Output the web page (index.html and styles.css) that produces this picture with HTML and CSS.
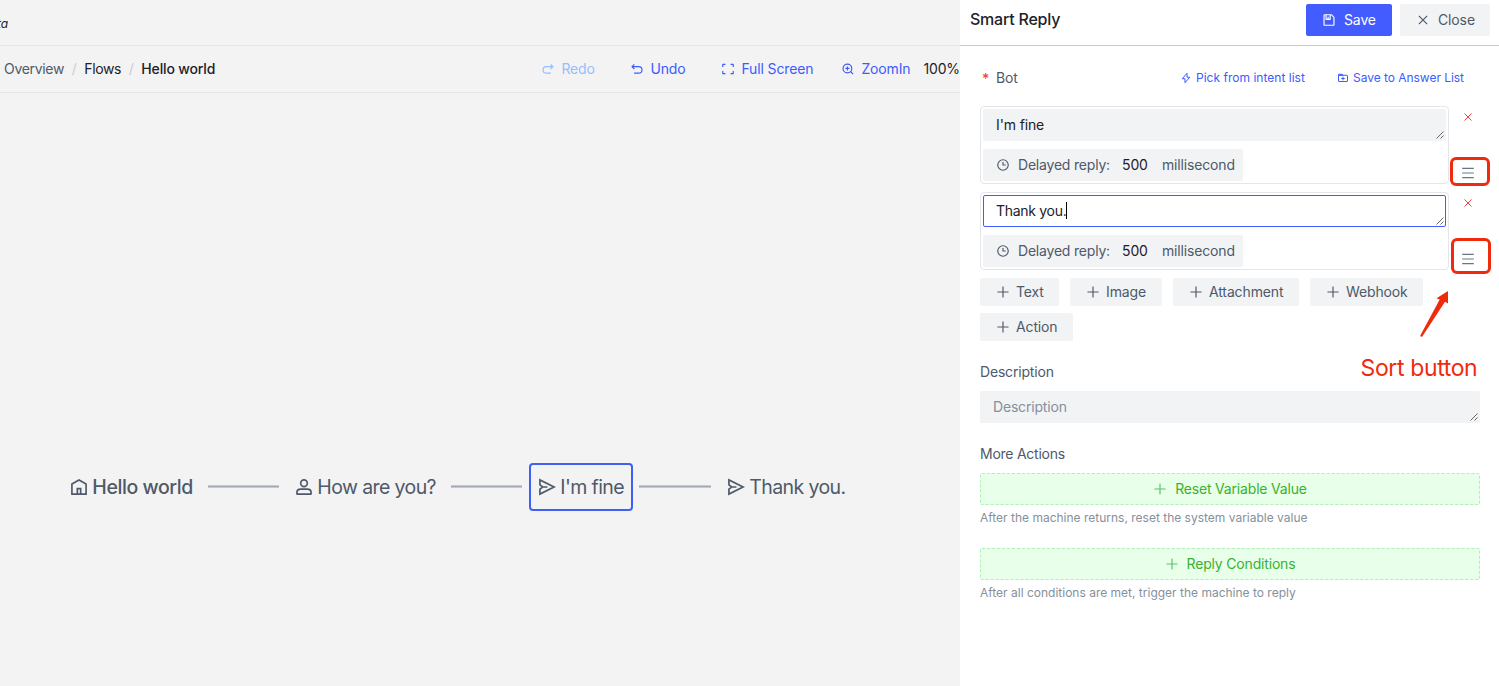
FILE: index.html
```
<!DOCTYPE html>
<html lang="en">
<head>
<meta charset="utf-8">
<title>Smart Reply</title>
<link rel="stylesheet" href="styles.css">
</head>
<body>
<svg class="sprite" aria-hidden="true">
  <symbol id="close" viewBox="0 0 48 48"><path d="M9.857 9.858 38.142 38.142M38.142 9.858 9.857 38.142"/></symbol>
  <symbol id="plus" viewBox="0 0 48 48"><path d="M5 24h38M24 5v38"/></symbol>
  <symbol id="save" viewBox="0 0 48 48"><path d="M21 13v9m18 20H9a2 2 0 0 1-2-2V8a2 2 0 0 1 2-2h22.55a2 2 0 0 1 1.414.586l7.45 7.45A2 2 0 0 1 41 15.45V40a2 2 0 0 1-2 2ZM14 6h14v15a1 1 0 0 1-1 1H15a1 1 0 0 1-1-1V6Z"/></symbol>
  <symbol id="clock" viewBox="0 0 48 48"><path d="M24 14v10h9.5"/><circle cx="24" cy="24" r="18"/></symbol>
  <symbol id="undo" viewBox="0 0 48 48"><path d="m15 8-8 8 8 8M8 16h22a11 11 0 0 1 0 22H14"/></symbol>
  <symbol id="redo" viewBox="0 0 48 48"><path d="m33 8 8 8-8 8M40 16H18a11 11 0 0 0 0 22h16"/></symbol>
  <symbol id="fullscreen" viewBox="0 0 48 48"><path d="M42 17V9a1 1 0 0 0-1-1h-8M6 17V9a1 1 0 0 1 1-1h8m27 23v8a1 1 0 0 1-1 1h-8M6 31v8a1 1 0 0 0 1 1h8"/></symbol>
  <symbol id="zoomin" viewBox="0 0 48 48"><circle cx="22" cy="22" r="15"/><path d="m32.6 32.6 8.9 8.9M29 22H15m7 7V15"/></symbol>
  <symbol id="home" viewBox="0 0 48 48"><path d="M7 17 24 7l17 10v24H7V17ZM20 28h8v13h-8V28Z"/></symbol>
  <symbol id="user" viewBox="0 0 48 48"><path d="M7 37c0-4.97 4.03-8 9-8h16c4.97 0 9 3.03 9 8v3a1 1 0 0 1-1 1H8a1 1 0 0 1-1-1v-3Z"/><circle cx="24" cy="15" r="8"/></symbol>
  <symbol id="send" viewBox="0 0 48 48"><path d="m14 24-7-5V7l34 17L7 41V29l7-5Zm0 0h11"/></symbol>
  <symbol id="bolt" viewBox="0 0 48 48"><path d="M28 5v16h11L20 43V27H9L28 5Z"/></symbol>
  <symbol id="folder" viewBox="0 0 48 48"><path d="M24 19v14m-7-7h14M6 13h18l-2.8-4H7a1 1 0 0 0-1 1v3Zm0 0h34a2 2 0 0 1 2 2v21a2 2 0 0 1-2 2H8a2 2 0 0 1-2-2V13Z"/></symbol>
  <symbol id="menu" viewBox="0 0 48 48"><path d="M4 8h40M4 24h40M4 40h40"/></symbol>
  <symbol id="grip" viewBox="0 0 8 8"><path d="M0.5 7.5 7.5 0.5M4.5 7.5l3-3"/></symbol>
</svg>

<div class="app">
  <main class="workspace">
    <header class="topbar"><em>ta</em></header>
    <div class="toolbar">
      <nav class="crumbs">
        <span class="muted">Overview</span><i>/</i><span class="flows">Flows</span><i>/</i><b>Hello world</b>
      </nav>
      <div class="tools">
        <span class="tool disabled"><svg class="icon"><use href="#redo"/></svg>Redo</span>
        <span class="tool"><svg class="icon"><use href="#undo"/></svg>Undo</span>
        <span class="tool fs"><svg class="icon"><use href="#fullscreen"/></svg>Full Screen</span>
        <span class="tool zi"><svg class="icon"><use href="#zoomin"/></svg>ZoomIn</span>
        <span class="percent">100%</span>
      </div>
    </div>
    <div class="canvas">
      <div class="node n1"><svg class="icon"><use href="#home"/></svg><b>Hello world</b></div>
      <div class="edge e1"></div>
      <div class="node n2"><svg class="icon"><use href="#user"/></svg><span>How are you?</span></div>
      <div class="edge e2"></div>
      <div class="node n3 selected"><svg class="icon"><use href="#send"/></svg><span>I'm fine</span></div>
      <div class="edge e3"></div>
      <div class="node n4"><svg class="icon"><use href="#send"/></svg><span>Thank you.</span></div>
    </div>
  </main>

  <aside class="drawer">
    <header class="drawer-head">
      <h1>Smart Reply</h1>
      <button class="btn primary"><svg class="icon"><use href="#save"/></svg>Save</button>
      <button class="btn"><svg class="icon"><use href="#close"/></svg>Close</button>
    </header>
    <div class="drawer-body">
      <div class="bot-row">
        <span class="star">*</span><span class="label">Bot</span>
        <a class="pick"><svg class="icon"><use href="#bolt"/></svg>Pick from intent list</a>
        <a class="answer"><svg class="icon"><use href="#folder"/></svg>Save to Answer List</a>
      </div>
      <div class="reply">
        <div class="card">
          <div class="field">I'm fine<svg class="grip"><use href="#grip"/></svg></div>
          <div class="delay"><svg class="icon"><use href="#clock"/></svg><span class="dl">Delayed reply:</span><span class="num">500</span><span class="unit">millisecond</span></div>
        </div>
        <div class="side"><svg class="icon del"><use href="#close"/></svg><svg class="icon sort"><use href="#menu"/></svg></div>
      </div>
      <div class="reply">
        <div class="card">
          <div class="field focus">Thank you.<span class="caret"></span><svg class="grip"><use href="#grip"/></svg></div>
          <div class="delay"><svg class="icon"><use href="#clock"/></svg><span class="dl">Delayed reply:</span><span class="num">500</span><span class="unit">millisecond</span></div>
        </div>
        <div class="side"><svg class="icon del"><use href="#close"/></svg><svg class="icon sort"><use href="#menu"/></svg></div>
      </div>
      <div class="adders">
        <button class="add text"><svg class="icon"><use href="#plus"/></svg>Text</button>
        <button class="add image"><svg class="icon"><use href="#plus"/></svg>Image</button>
        <button class="add attachment"><svg class="icon"><use href="#plus"/></svg>Attachment</button>
        <button class="add webhook"><svg class="icon"><use href="#plus"/></svg>Webhook</button>
        <button class="add action"><svg class="icon"><use href="#plus"/></svg>Action</button>
      </div>
      <div class="section-label">Description</div>
      <div class="field description">Description<svg class="grip"><use href="#grip"/></svg></div>
      <div class="section-label more">More Actions</div>
      <button class="dashed"><svg class="icon"><use href="#plus"/></svg>Reset Variable Value</button>
      <p class="hint">After the machine returns, reset the system variable value</p>
      <button class="dashed"><svg class="icon"><use href="#plus"/></svg>Reply Conditions</button>
      <p class="hint">After all conditions are met, trigger the machine to reply</p>
    </div>
  </aside>

  <div class="mark m1"></div>
  <div class="mark m2"></div>
  <svg class="arrow" viewBox="0 0 32 50"><path d="M28 1 16.5 8.2l3.2 1.3L.3 45.5q.3 1.8 2 1L25 11.8l3 1.7Z"/></svg>
  <div class="note">Sort button</div>
</div>
</body>
</html>
```
FILE: styles.css
```
* { box-sizing: border-box; }
body { margin: 0; font: 14px/22px Inter, "Liberation Sans", sans-serif; letter-spacing: -.13px; color: #1d2129; }
.sprite { display: none; }
.icon { width: 14px; height: 14px; flex: none; }
svg { fill: none; stroke: currentColor; stroke-width: 4; }
button { font: inherit; letter-spacing: inherit; border: 0; margin: 0; }

.app { position: relative; display: flex; width: 1499px; height: 686px; overflow: hidden; background: #fff; }
.workspace { width: 960px; display: flex; flex-direction: column; background: #f3f3f3; overflow: hidden; }
.topbar { height: 46px; border-bottom: 1px solid #e5e6e8; padding-top: 13px; font-size: 12px; }
.topbar em { margin-left: -3px; }
.toolbar { height: 47px; border-bottom: 1px solid #e5e6e8; display: flex; align-items: center; white-space: nowrap; }
.crumbs { width: 542.6px; padding-left: 4px; display: flex; letter-spacing: -.32px; }
.crumbs i { width: 20.3px; text-align: center; color: #c9cdd4; font-style: normal; }
.crumbs b { font-weight: 500; letter-spacing: -.15px; }
.muted { color: #4e5969; }
.flows { letter-spacing: -.4px; }
.tools { display: flex; color: #3c5cff; }
.tool { display: flex; align-items: center; width: 89px; gap: 6px; }
.disabled { color: #94bfff; }
.tool.fs { width: 120px; margin-left: 2px; }
.tool.zi { width: 82px; }
.percent { color: #1d2129; }

.canvas { position: relative; flex: 1; }
.node { position: absolute; top: 370px; height: 48px; display: flex; align-items: center; gap: 3.3px; font-size: 19.5px; letter-spacing: -.6px; color: #4e5969; white-space: nowrap; }
.node .icon { width: 20px; height: 20px; }
.node b { font-weight: 500; letter-spacing: -.42px; }
.n1 { left: 69px; }
.n2 { left: 294px; }
.n3 { left: 529px; width: 104px; padding-left: 6px; border: 2px solid #3f5ff5; border-radius: 4px; }
.n4 { left: 726px; }
.edge { position: absolute; top: 392px; height: 3px; width: 71px; background: #a3a8b7; border-top: 1px solid #c6c9d1; border-bottom: 1px solid #c6c9d1; }
.e1 { left: 208px; }
.e2 { left: 451px; }
.e3 { left: 639px; width: 72px; }

.drawer { width: 539px; background: #fff; }
.drawer-head { height: 46px; border-bottom: 1px solid #c9c9cb; display: flex; gap: 8px; padding: 4px 9px 0 10px; }
h1 { flex: 1; margin: 3px 0 0; font-size: 16px; line-height: 24px; font-weight: 500; letter-spacing: -.22px; }
.btn { height: 32px; width: 90px; border-radius: 2px; display: flex; align-items: center; gap: 8px; padding: 0 16px; background: #f2f3f5; color: #4e5969; }
.primary { width: 86px; background: #435cff; color: #fff; }

.drawer-body { padding: 21px 19px 0 20px; }
.bot-row { height: 22px; display: flex; align-items: center; color: #4e5969; margin-bottom: 17px; }
.star { width: 16px; padding: 2px 0 0 2px; color: #f53f3f; font-weight: 500; }
.bot-row a { display: flex; align-items: center; gap: 4px; font-size: 12px; letter-spacing: 0.02px; color: #3c5cff; white-space: nowrap; }
.bot-row a .icon { width: 12px; height: 12px; }
.label { width: 184px; }
.bot-row .answer { margin-left: auto; margin-right: 16px; letter-spacing: -.04px; }

.reply { display: flex; margin-bottom: 8px; }
.card { flex: none; width: 469px; height: 78px; border: 1px solid #e5e6eb; border-radius: 4px; padding: 2px; }
.field { position: relative; height: 32px; background: #f2f3f5; border: 1px solid transparent; border-radius: 2px; padding: 4px 12px; display: flex; }
.focus { background: #fff; border-color: #435cff; letter-spacing: -.3px; }
.caret { width: 1px; height: 17px; margin-top: 2px; background: #000; }
.grip { position: absolute; right: 1px; bottom: 1px; width: 8px; height: 8px; stroke: #444; stroke-width: .8; }
.delay { width: 260px; height: 32px; margin-top: 8px; border-radius: 2px; background: #f2f3f5; padding-left: 13px; display: flex; align-items: center; color: #4e5969; white-space: nowrap; }
.dl { margin-left: 8px; width: 104px; letter-spacing: -.2px; }
.num { width: 40px; color: #1d2129; }
.unit { letter-spacing: -.16px; }
.side { flex: none; width: 38px; display: flex; flex-direction: column; align-items: center; justify-content: space-between; padding: 5px 0 4px; }
.del { width: 12px; height: 12px; color: #f53f3f; }
.sort { color: #6b7785; }

.adders { display: flex; flex-wrap: wrap; gap: 7px 11px; }
.add { height: 28px; border-radius: 2px; background: #f2f3f5; color: #4e5969; display: flex; align-items: center; gap: 6px; padding: 0 0 0 16px; }
.text { width: 79px; }
.image { width: 92px; }
.attachment { width: 126px; }
.webhook { width: 113px; }
.action { width: 93px; }
.section-label { margin-top: 20px; color: #4e5969; letter-spacing: -.18px; }
.description { margin-top: 8px; color: #86909c; letter-spacing: -.18px; }
.more { margin-bottom: 8px; letter-spacing: -.25px; }
.dashed { width: 100%; height: 32px; border: 1px dashed #aff0b5; border-radius: 2px; background: #e8ffea; color: #3bb22f; display: flex; align-items: center; justify-content: center; gap: 8px; letter-spacing: -.18px; }
.dashed .icon { color: #5bc468; }
.hint { margin: 3px 0 20px; font-size: 12px; line-height: 20px; letter-spacing: 0; color: #86909c; }

.mark { position: absolute; border: 3px solid #f02b0d; border-radius: 6px; }
.m1 { left: 1450px; top: 157px; width: 40px; height: 29px; }
.m2 { left: 1451px; top: 238px; width: 40px; height: 36px; }
.arrow { position: absolute; left: 1420px; top: 290px; width: 32px; height: 50px; stroke: none; fill: #f02b0d; }
.note { position: absolute; left: 1360.5px; top: 352px; font-size: 23px; line-height: 32px; letter-spacing: -.37px; color: #f02b0d; white-space: nowrap; }
```
